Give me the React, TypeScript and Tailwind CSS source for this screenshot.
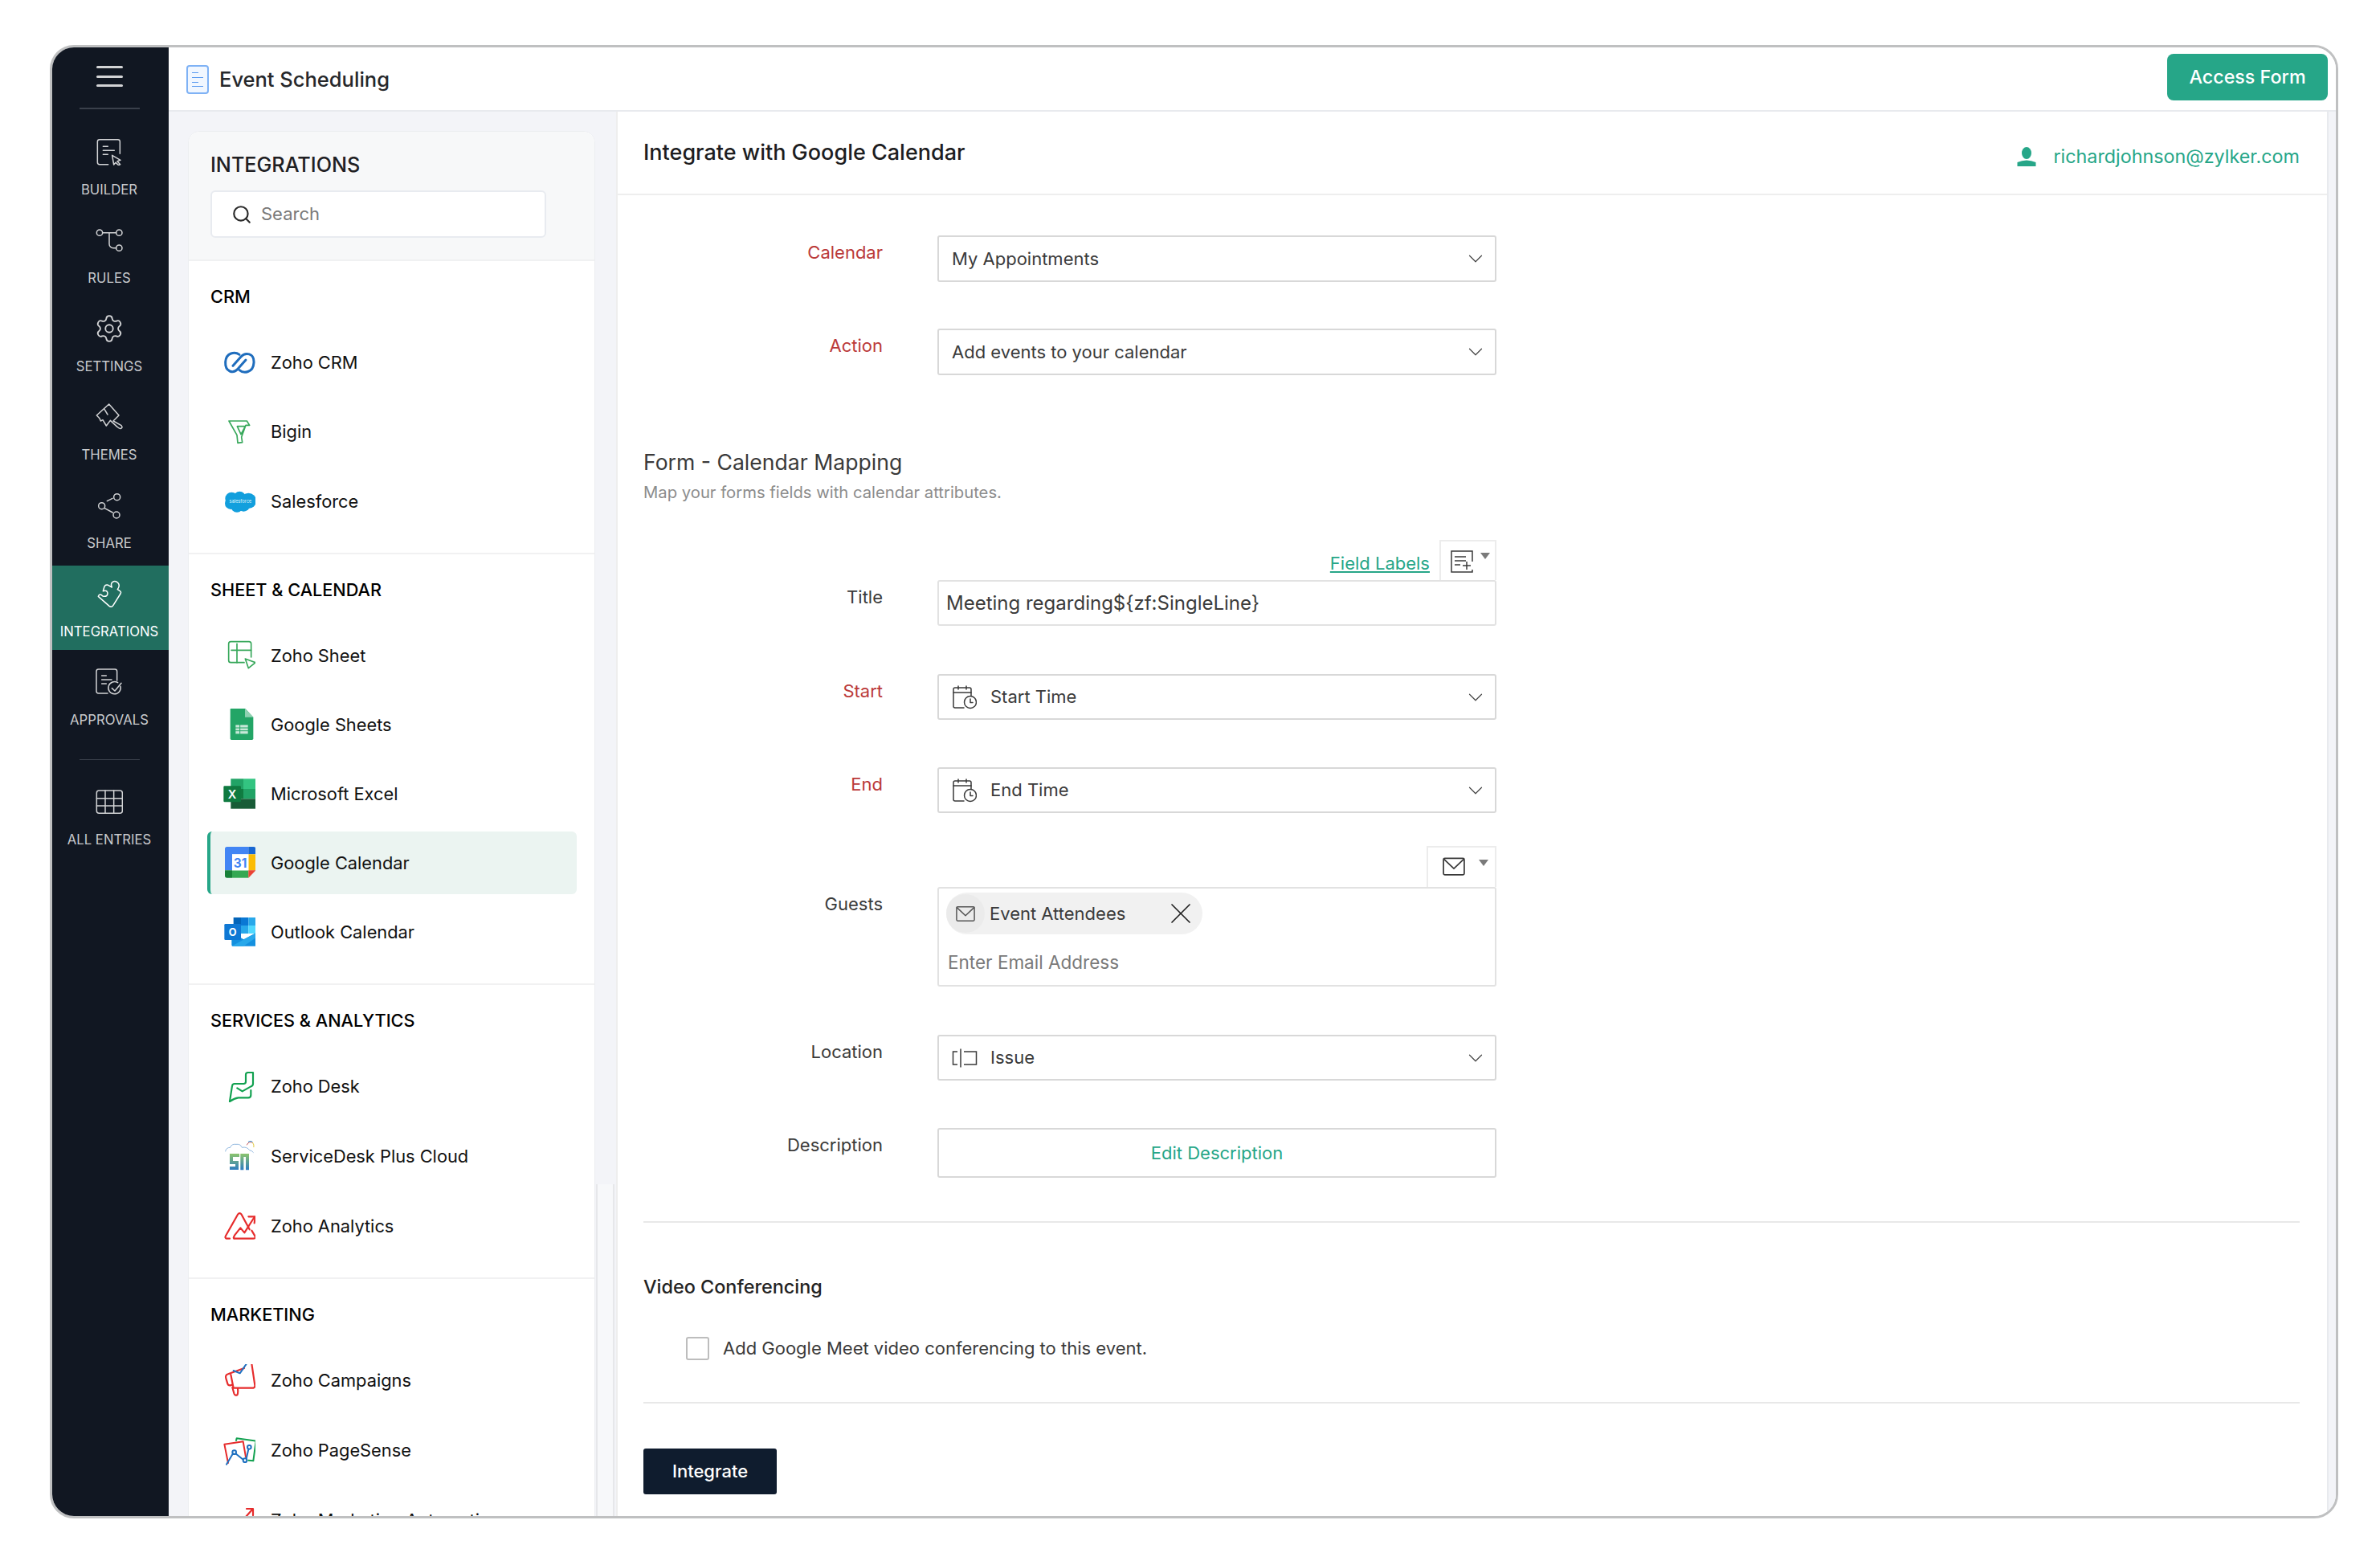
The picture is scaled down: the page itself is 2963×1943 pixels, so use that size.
import { ChevronDown, Search, Settings, X } from "lucide-react";
import type { ReactNode } from "react";

function Svg({ box, size = 34, className, children }: { box: string; size?: number; className?: string; children: ReactNode }) {
  return (
    <svg viewBox={box} width={size} height={size} fill="none" strokeLinecap="round" strokeLinejoin="round" className={className}>
      {children}
    </svg>
  );
}

/* sidebar icons */
const side = { stroke: "#d2d3d5", strokeWidth: 4.5 };

function BuilderIcon() {
  return (
    <Svg box="85 340 102 102">
      <g {...side}>
        <path d="M132 438 H100 a8 8 0 0 1 -8-8 V353 a8 8 0 0 1 8-8 H168 a8 8 0 0 1 8 8 V398" />
        <path d="M113 371 H131 M113 386 H155 M113 401 H131" />
        <path d="M147 404 L178 422 L166 426 L177 438 L171 441 L160 431 L153 439 Z" />
      </g>
    </Svg>
  );
}
function RulesIcon() {
  return (
    <Svg box="85 670 102 102">
      <g {...side}>
        <circle cx="100" cy="693" r="11" />
        <circle cx="173" cy="693" r="11" />
        <circle cx="173" cy="750" r="11" />
        <path d="M111 693 H162 M136 693 V735 a15 15 0 0 0 15 15 H162" />
      </g>
    </Svg>
  );
}
function ThemesIcon() {
  return (
    <Svg box="85 1330 102 102">
      <g {...side}>
        <path d="M89 1375 L135 1333 L172 1375 L151 1396 L180 1412 Q188 1420 180 1424 Q174 1426 166 1418 L140 1394 L125 1414 L112 1392 L104 1396 L100 1386 Z" />
        <path d="M118 1352 L130 1372" />
      </g>
    </Svg>
  );
}
function ShareIcon() {
  return (
    <Svg box="85 155 102 102">
      <g {...side}>
        <circle cx="165" cy="175" r="12" />
        <circle cx="108" cy="208" r="12" />
        <circle cx="163" cy="242" r="12" />
        <path d="M128 190 L148 180 M119 217 L149 233" />
      </g>
    </Svg>
  );
}
function PuzzleIcon() {
  return (
    <Svg box="85 484 102 102">
      <path
        d="M95 545 L136 581 Q145 588 151 578 L178 535 Q182 528 175 524 L167 519 Q178 504 168 494 Q158 484 148 492 Q140 498 146 511 L132 503 Q122 500 118 508 L113 525 Q128 520 130 533 Q130 548 112 544 Q100 532 95 545 Z"
        stroke="#ffffff"
        strokeWidth="4.5"
      />
    </Svg>
  );
}
function ApprovalsIcon() {
  return (
    <Svg box="85 815 102 102">
      <g {...side}>
        <path d="M130 908 H96 a8 8 0 0 1 -8-8 V826 a8 8 0 0 1 8-8 H157 a8 8 0 0 1 8 8 V860" />
        <path d="M108 842 H125 M108 857 H145 M108 872 H125" />
        <path d="M178 882 A23 23 0 1 1 168 868" />
        <path d="M146 889 L157 899 L181 870" />
      </g>
    </Svg>
  );
}
function GridIcon() {
  return (
    <Svg box="85 1262 102 102">
      <g {...side}>
        <rect x="89" y="1271" width="96" height="85" rx="9" />
        <path d="M89 1300 H185 M89 1328 H185 M121 1271 V1356 M153 1271 V1356" />
      </g>
    </Svg>
  );
}

/* logos, 40px box */
function ZohoCrm() {
  return (
    <Svg box="24 3 120 120" size={40}>
      <g stroke="#1f6dbd" strokeWidth="9">
        <path d="M84 34 C68 22 34 26 32 62 C30 100 62 106 78 88 L108 54" />
        <path d="M84 92 C100 106 136 102 138 64 C140 28 106 24 90 42 L60 76" />
      </g>
    </Svg>
  );
}
function BiginLogo() {
  return (
    <Svg box="24 264 120 120" size={40}>
      <path d="M45 282 H112 L122 298 H108 L92 342 L95 362 L78 364 L75 335 Z M76 302 H106 L90 332 Z" stroke="#38a85b" strokeWidth="5" />
    </Svg>
  );
}
function SalesforceLogo() {
  return (
    <Svg box="24 522 120 120" size={40}>
      <g fill="#129fdd">
        <circle cx="55" cy="572" r="24" />
        <circle cx="85" cy="568" r="23" />
        <circle cx="118" cy="580" r="29" />
        <circle cx="75" cy="600" r="23" />
        <circle cx="52" cy="590" r="22" />
        <circle cx="100" cy="596" r="24" />
      </g>
      <text x="88" y="587" fill="#dff3fb" fontSize="17" textAnchor="middle" fontFamily="Inter, sans-serif">salesforce</text>
    </Svg>
  );
}
function ZohoSheet() {
  return (
    <Svg box="24 1098 120 120" size={40}>
      <g stroke="#38a85b" strokeWidth="5">
        <path d="M102 1184 H52 a8 8 0 0 1-8-8 V1114 a8 8 0 0 1 8-8 H120 a8 8 0 0 1 8 8 V1164" />
        <path d="M54 1138 H128 M75 1114 V1184" />
        <path d="M106 1170 L144 1184 L118 1205 Z" />
      </g>
    </Svg>
  );
}
function GoogleSheets() {
  return (
    <Svg box="24 1356 120 120" size={40}>
      <path d="M55 1355 H105 L136 1388 V1468 a5 5 0 0 1-5 5 H55 a5 5 0 0 1-5-5 V1360 a5 5 0 0 1 5-5 Z" fill="#23a566" />
      <path d="M105 1355 L136 1388 H105 Z" fill="#8ed1b1" />
      <rect x="70" y="1417" width="46" height="33" fill="#c7e8d7" />
      <path d="M70 1428 H116 M70 1439 H116 M86 1417 V1450" stroke="#23a566" strokeWidth="3" />
    </Svg>
  );
}
function ExcelLogo() {
  return (
    <Svg box="24 204 120 120" size={40}>
      <rect x="52" y="208" width="47" height="38" fill="#21a366" />
      <rect x="99" y="208" width="46" height="38" fill="#33c481" />
      <rect x="52" y="246" width="47" height="37" fill="#107c41" />
      <rect x="99" y="246" width="46" height="37" fill="#21a366" />
      <rect x="52" y="283" width="93" height="37" fill="#185c37" />
      <rect x="25" y="235" width="65" height="60" rx="4" fill="#0f7a40" />
      <text x="57" y="281" fill="#ffffff" fontSize="44" fontWeight="600" textAnchor="middle" fontFamily="Inter, sans-serif">X</text>
    </Svg>
  );
}
function GoogleCalendar() {
  return (
    <Svg box="24 462 120 120" size={40}>
      <path d="M38 462 H118 V490 H57 V550 H30 V470 a8 8 0 0 1 8-8 Z" fill="#4285f4" />
      <path d="M118 462 H137 a8 8 0 0 1 8 8 V490 H118 Z" fill="#1967d2" />
      <rect x="118" y="490" width="27" height="60" fill="#fbbc04" />
      <rect x="57" y="550" width="61" height="28" fill="#34a853" />
      <path d="M30 550 H57 V578 H38 a8 8 0 0 1-8-8 Z" fill="#188038" />
      <path d="M118 550 H145 L118 578 Z" fill="#ea4335" />
      <rect x="57" y="490" width="61" height="60" fill="#ffffff" />
      <text x="87" y="539" fill="#4285f4" fontSize="46" fontWeight="700" textAnchor="middle" fontFamily="Inter, sans-serif">31</text>
    </Svg>
  );
}
function OutlookLogo() {
  return (
    <Svg box="24 720 120 120" size={40}>
      <rect x="62" y="726" width="28" height="30" fill="#0364b8" />
      <rect x="90" y="726" width="28" height="30" fill="#0a78d4" />
      <rect x="118" y="726" width="26" height="30" fill="#28a8ea" />
      <rect x="62" y="756" width="28" height="30" fill="#0a78d4" />
      <rect x="90" y="756" width="28" height="30" fill="#28a8ea" />
      <rect x="118" y="756" width="26" height="30" fill="#50d9ff" />
      <path d="M55 782 L100 808 L148 782 V828 a5 5 0 0 1-5 5 H60 a5 5 0 0 1-5-5 Z" fill="#1490df" />
      <path d="M55 833 L148 782 V800 L100 833 Z" fill="#28a8ea" />
      <rect x="28" y="750" width="62" height="60" rx="4" fill="#0f78d4" />
      <text x="59" y="794" fill="#ffffff" fontSize="38" fontWeight="700" textAnchor="middle" fontFamily="Inter, sans-serif">O</text>
    </Svg>
  );
}
function ZohoDesk() {
  return (
    <Svg box="24 33 120 120" size={40}>
      <g stroke="#12a150" strokeWidth="6.5">
        <path d="M48 150 L57 92 Q58 84 66 84 H100 Q108 84 108 76 V50 Q108 42 116 42 H135 V84 Q135 92 127 94 L95 112 L76 100" />
        <path d="M127 108 V126 Q127 136 117 136 H80 Q65 138 48 150" />
      </g>
    </Svg>
  );
}
function ServiceDesk() {
  return (
    <Svg box="24 294 120 120" size={40}>
      <defs>
        <linearGradient id="sd" gradientUnits="userSpaceOnUse" x1="0" y1="345" x2="0" y2="405">
          <stop offset="0" stopColor="#8cc56c" />
          <stop offset="1" stopColor="#2f7cc0" />
        </linearGradient>
      </defs>
      <path d="M32 336 Q34 322 50 322 Q54 308 72 310 Q88 308 94 322 Q112 318 122 332 Q132 334 136 340" stroke="#7ca9d8" strokeWidth="2.5" />
      <path d="M112 312 Q120 296 134 304" stroke="#c55a5a" strokeWidth="3" />
      <path d="M134 304 Q140 312 138 320" stroke="#e3c93f" strokeWidth="3" />
      <path d="M118 300 Q126 296 132 300" stroke="#3a9ad9" strokeWidth="3" />
      <g stroke="url(#sd)" strokeWidth="12" strokeLinecap="butt" strokeLinejoin="miter">
        <path d="M84 351 H54 V378 H75 V399 H48" />
        <path d="M94 406 V351 H114 V406" />
      </g>
    </Svg>
  );
}
function ZohoAnalytics() {
  return (
    <Svg box="24 555 120 120" size={40}>
      <g stroke="#e62c2c" strokeWidth="6.5">
        <path d="M48 662 H36 Q29 660 33 652 L78 572 Q85 563 92 572 L122 628" />
        <path d="M64 660 Q60 662 66 650 L88 622 L103 640 L140 582" />
        <path d="M118 580 H143 L140 604" />
        <path d="M64 662 H136 Q146 662 142 652 L130 632" />
      </g>
    </Svg>
  );
}
function ZohoCampaigns() {
  return (
    <Svg box="24 1131 120 120" size={40}>
      <g stroke="#e62c2c" strokeWidth="6.5">
        <path d="M102 1146 L42 1168 Q30 1172 34 1184 L40 1204 Q42 1212 52 1210 L56 1208" />
        <path d="M52 1170 L62 1220 H136 Q143 1218 142 1210 L128 1116 H120" />
        <path d="M58 1218 L64 1240 Q68 1250 76 1246 Q80 1240 78 1222" />
      </g>
      <path d="M62 1155 L86 1165 L120 1116" stroke="#1e70c0" strokeWidth="6" />
    </Svg>
  );
}
function ZohoPageSense() {
  return (
    <Svg box="24 1392 120 120" size={40}>
      <path d="M72 1416 L74 1408 L146 1418 L136 1492 L118 1490" stroke="#12a150" strokeWidth="6" />
      <path d="M42 1500 L28 1430 L98 1420 L108 1478" stroke="#e62c2c" strokeWidth="6" />
      <g stroke="#1e70c0" strokeWidth="6">
        <path d="M36 1505 L60 1465 M70 1465 L98 1487 M110 1484 L118 1448" />
        <circle cx="65" cy="1460" r="7" />
        <circle cx="105" cy="1490" r="7" />
        <circle cx="121" cy="1441" r="7" />
      </g>
    </Svg>
  );
}
function MarketingAutomation() {
  return (
    <Svg box="0 0 40 40" size={40}>
      <path d="M4 16 H28 L36 7 M29 6 H37 V14" stroke="#e62c2c" strokeWidth="2.2" />
    </Svg>
  );
}

/* form icons */
function CalClock() {
  return (
    <Svg box="0 0 30 30" size={30}>
      <g stroke="#3a3a3a" strokeWidth="1.5">
        <path d="M14 28 H3 a2 2 0 0 1-2-2 V5 a2 2 0 0 1 2-2 H21 a2 2 0 0 1 2 2 V13" />
        <path d="M1 9 H23 M7 1 V5 M17 1 V5" />
        <circle cx="22" cy="21" r="7.5" />
        <path d="M22 17 V21.5 H25" />
      </g>
    </Svg>
  );
}
function MailIcon({ size = 26, color = "#3a3a3a" }: { size?: number; color?: string }) {
  return (
    <Svg box="0 0 26 26" size={size}>
      <g stroke={color} strokeWidth="1.6">
        <rect x="1" y="4" width="24" height="19" rx="1.5" />
        <path d="M1.5 5 L13 16 L24.5 5" />
      </g>
    </Svg>
  );
}

type Item = { name: string; logo: ReactNode; active?: boolean };

const sections: { title: string; gap: string; items: Item[] }[] = [
  {
    title: "CRM",
    gap: "gap-[8.5px]",
    items: [
      { name: "Zoho CRM", logo: <ZohoCrm /> },
      { name: "Bigin", logo: <BiginLogo /> },
      { name: "Salesforce", logo: <SalesforceLogo /> },
    ],
  },
  {
    title: "SHEET & CALENDAR",
    gap: "gap-[8px]",
    items: [
      { name: "Zoho Sheet", logo: <ZohoSheet /> },
      { name: "Google Sheets", logo: <GoogleSheets /> },
      { name: "Microsoft Excel", logo: <ExcelLogo /> },
      { name: "Google Calendar", logo: <GoogleCalendar />, active: true },
      { name: "Outlook Calendar", logo: <OutlookLogo /> },
    ],
  },
  {
    title: "SERVICES & ANALYTICS",
    gap: "gap-[9px]",
    items: [
      { name: "Zoho Desk", logo: <ZohoDesk /> },
      { name: "ServiceDesk Plus Cloud", logo: <ServiceDesk /> },
      { name: "Zoho Analytics", logo: <ZohoAnalytics /> },
    ],
  },
  {
    title: "MARKETING",
    gap: "gap-[9px]",
    items: [
      { name: "Zoho Campaigns", logo: <ZohoCampaigns /> },
      { name: "Zoho PageSense", logo: <ZohoPageSense /> },
      { name: "Zoho Marketing Automation", logo: <MarketingAutomation /> },
    ],
  },
];

function NavItem({ icon, label, active }: { icon: ReactNode; label: string; active?: boolean }) {
  return (
    <div className={`mb-[4.5px] flex h-[105.5px] flex-col items-center pt-[18px] pr-[3px] ${active ? "bg-[#216e5f] text-white" : "text-[#c8cacd]"}`}>
      <div className="flex h-[34px] items-center justify-center">{icon}</div>
      <div className="mt-[18px] text-[16.7px] leading-[24px] whitespace-nowrap">{label}</div>
    </div>
  );
}

function Sidebar() {
  return (
    <aside className="flex w-[145px] shrink-0 flex-col bg-[#111722]">
      <div className="mt-[23px] pr-[3px]">
        <div className="mx-auto flex w-[33px] flex-col gap-[8.5px]">
          <div className="h-[3px] rounded-full bg-[#d2d3d5]" />
          <div className="h-[3px] rounded-full bg-[#d2d3d5]" />
          <div className="h-[3px] rounded-full bg-[#d2d3d5]" />
        </div>
        <div className="mx-auto mt-[26px] h-[1.5px] w-[75px] bg-[#3a404b]" />
      </div>
      <div className="mt-[18px]">
        <NavItem icon={<BuilderIcon />} label="BUILDER" />
        <NavItem icon={<RulesIcon />} label="RULES" />
        <NavItem icon={<Settings size={38} strokeWidth={1.15} color="#d2d3d5" />} label="SETTINGS" />
        <NavItem icon={<ThemesIcon />} label="THEMES" />
        <NavItem icon={<ShareIcon />} label="SHARE" />
        <NavItem icon={<PuzzleIcon />} label="INTEGRATIONS" active />
        <NavItem icon={<ApprovalsIcon />} label="APPROVALS" />
      </div>
      <div className="mt-[21px] pr-[3px]">
        <div className="mx-auto h-[1.5px] w-[75px] bg-[#3a404b]" />
      </div>
      <div className="mt-[17px]">
        <NavItem icon={<GridIcon />} label="ALL ENTRIES" />
      </div>
    </aside>
  );
}

function IntegrationList() {
  return (
    <div className="relative w-[557px] shrink-0 bg-[#f3f4f8] pt-[24px] pl-[24px]">
      <div className="w-[507px] rounded-t-[14px] border border-[#eceef1] bg-white">
        <div className="rounded-t-[14px] border-b-2 border-[#f0f1f2] bg-[#f7f8f9] px-[27px] pt-[25px] pb-[27px]">
          <h2 className="text-[25.2px] leading-[32px] font-medium text-[#1f2023]">INTEGRATIONS</h2>
          <div className="mt-[16px] flex h-[59px] w-[418px] items-center rounded-[6px] border-2 border-[#e8ebf0] bg-white pl-[24px]">
            <Search size={26} strokeWidth={2} color="#2b2b2b" />
            <span className="ml-[11px] text-[22px] text-[#7a7a7a]">Search</span>
          </div>
        </div>
        {sections.map((s) => (
          <section key={s.title} className="border-b-2 border-[#f1f1f2] pt-[30px] pb-[25px]">
            <h3 className="px-[27px] text-[21.7px] leading-[28px] font-medium text-black">{s.title}</h3>
            <div className={`mt-[29px] flex flex-col ${s.gap} pl-[23px]`}>
              {s.items.map((it) => (
                <div
                  key={it.name}
                  className={`flex h-[78px] w-[460px] items-center ${it.active ? "rounded-[6px] border-l-4 border-[#26a688] bg-[#ebf4f1] pl-[16px]" : "pl-[20px]"}`}
                >
                  <div className="h-[40px] w-[40px] shrink-0">{it.logo}</div>
                  <span className="ml-[19px] text-[21.8px] whitespace-nowrap text-[#111111]">{it.name}</span>
                </div>
              ))}
            </div>
          </section>
        ))}
      </div>
      {/* scrollbar track */}
      <div className="absolute top-[1335px] right-[2px] bottom-0 w-[23px] border-x-2 border-[#e6e7ea] bg-[#f7f8fa]" />
    </div>
  );
}

function Label({ text, required }: { text: string; required?: boolean }) {
  return (
    <div className={`w-[298px] shrink-0 pt-[7px] text-right text-[22px] leading-[28px] ${required ? "text-[#bb3a3a]" : "text-[#3b3b3b]"}`}>
      {text}
    </div>
  );
}

function Select({ text, icon, height = "h-[58px]" }: { text: string; icon?: ReactNode; height?: string }) {
  return (
    <div className={`flex ${height} w-[696px] items-center rounded-[3px] border-2 border-[#d8d8d8] pr-[9px] pl-[16px] text-[22px] text-[#3b3b3b]`}>
      {icon && <div className="mr-[16px] flex w-[32px] justify-center">{icon}</div>}
      <span className="flex-1">{text}</span>
      <ChevronDown size={30} strokeWidth={0.95} color="#444444" />
    </div>
  );
}

function Caret() {
  return <div className="h-0 w-0 border-x-[6.5px] border-t-[8px] border-x-transparent border-t-[#7a7a7a]" />;
}

function FormPanel() {
  return (
    <main className="flex-1 border-l-2 border-[#eeeeee] bg-white">
      <div className="flex h-[104px] items-center justify-between border-b-2 border-[#eeeeee] pr-[34px] pl-[32px]">
        <h1 className="text-[27px] font-medium text-[#1d1d1f]">Integrate with Google Calendar</h1>
        <div className="mt-[10px] flex items-center gap-[21px] text-[23.3px] text-[#26a688]">
          <svg width="24" height="24" viewBox="0 0 24 24" fill="#26a688">
            <ellipse cx="12" cy="7.5" rx="6" ry="7.5" />
            <path d="M0.5 19 Q12 14 23.5 19 V24 H0.5 Z" />
          </svg>
          richardjohnson@zylker.com
        </div>
      </div>
      <div className="px-[32px] pt-[50px]">
        <div className="flex gap-[68px]">
          <Label text="Calendar" required />
          <Select text="My Appointments" />
        </div>
        <div className="mt-[58px] flex gap-[68px]">
          <Label text="Action" required />
          <Select text="Add events to your calendar" />
        </div>
        <h2 className="mt-[90px] text-[26.6px] leading-[36px] text-[#3a3a3a]">Form - Calendar Mapping</h2>
        <p className="mt-[6px] text-[20.25px] leading-[28px] text-[#8c8c8c]">Map your forms fields with calendar attributes.</p>

        <div className="mt-[45px] ml-[366px] flex h-[50px] w-[696px] items-end justify-end">
          <span className="mr-[12px] mb-[7px] text-[22px] leading-[28px] text-[#26a688] underline underline-offset-2">Field Labels</span>
          <div className="flex h-[50px] w-[71px] items-start gap-[9px] border-x-2 border-t-2 border-[#ececec] pt-[11px] pl-[12px]">
            <svg width="28" height="28" viewBox="0 0 28 28" fill="none" stroke="#3a3a3a" strokeWidth="1.5">
              <path d="M27 14 V1 H1 V27 H27 V24" />
              <path d="M5 8 H19 M5 13 H19 M5 18 H12 M15 19 H25 M20 14 V24" />
            </svg>
            <div className="mt-[3px]"><Caret /></div>
          </div>
        </div>
        <div className="flex gap-[68px]">
          <Label text="Title" />
          <div className="flex h-[57px] w-[696px] items-center rounded-[3px] border-2 border-[#e2e2e2] pl-[9px] text-[24px] text-[#3b3b3b]">
            Meeting regarding{"${zf:SingleLine}"}
          </div>
        </div>
        <div className="mt-[60px] flex gap-[68px]">
          <Label text="Start" required />
          <Select text="Start Time" icon={<CalClock />} height="h-[57px]" />
        </div>
        <div className="mt-[59px] flex gap-[68px]">
          <Label text="End" required />
          <Select text="End Time" icon={<CalClock />} height="h-[57px]" />
        </div>

        <div className="mt-[41px] ml-[366px] flex h-[51px] w-[696px] justify-end">
          <div className="flex h-[51px] w-[87px] items-start gap-[17px] border-x-2 border-t-2 border-[#ececec] pt-[9px] pl-[18px]">
            <MailIcon size={28} />
            <div className="mt-[6px]"><Caret /></div>
          </div>
        </div>
        <div className="flex gap-[68px]">
          <Label text="Guests" />
          <div className="h-[124px] w-[696px] rounded-[3px] border-2 border-[#e2e2e2] pt-[5px] pl-[9px]">
            <div className="relative flex h-[52px] w-[319px] items-center rounded-full bg-[#f1f1f1] text-[22px] text-[#3b3b3b]">
              <div className="flex h-[48px] w-[48px] items-center justify-center rounded-full bg-[#ebebeb]">
                <MailIcon size={24} color="#555555" />
              </div>
              <span className="ml-[6px]">Event Attendees</span>
              <X className="absolute top-[4px] right-[5px]" size={44} strokeWidth={0.9} color="#1f1f1f" />
            </div>
            <div className="mt-[21px] pl-[2px] text-[22.5px] leading-[28px] text-[#7a7a7a]">Enter Email Address</div>
          </div>
        </div>
        <div className="mt-[60px] flex gap-[68px]">
          <Label text="Location" />
          <Select
            text="Issue"
            height="h-[57px]"
            icon={
              <svg width="32" height="24" viewBox="0 0 32 24" fill="none" stroke="#3a3a3a" strokeWidth="1.5">
                <path d="M7 4 H1.5 V20 H7 M11 0.5 V23.5 M15 4 H30.5 V20 H15" />
              </svg>
            }
          />
        </div>
        <div className="mt-[59px] flex gap-[68px]">
          <Label text="Description" />
          <div className="flex h-[62px] w-[696px] items-center justify-center rounded-[3px] border-2 border-[#d8d8d8] text-[22px] text-[#26a688]">
            Edit Description
          </div>
        </div>
        <div className="mt-[54px] h-[2px] w-[2062px] bg-[#e8e8e8]" />
        <h3 className="mt-[64px] text-[23.4px] leading-[32px] font-medium text-[#232323]">Video Conferencing</h3>
        <div className="mt-[46px] ml-[53px] flex h-[29px] items-center gap-[17px] text-[22px] text-[#3b3b3b]">
          <div className="h-[29px] w-[29px] rounded-[3px] border-2 border-[#bdbdbd]" />
          Add Google Meet video conferencing to this event.
        </div>
        <div className="mt-[52px] h-[2px] w-[2062px] bg-[#e8e8e8]" />
        <button className="mt-[56px] h-[57px] w-[166px] rounded-[3px] bg-[#0f1c2e] text-[22px] font-medium text-white">Integrate</button>
      </div>
    </main>
  );
}

export default function App() {
  return (
    <div className="h-[1943px] w-[2963px] overflow-hidden bg-white pt-[56px] pl-[62px] font-['Inter',sans-serif]">
      <div className="flex h-[1834px] w-[2849px] overflow-hidden rounded-[30px] border-[3px] border-[#bfc0c1]">
        <Sidebar />
        <div className="flex min-w-0 flex-1 flex-col">
          <header className="flex h-[80px] shrink-0 items-center justify-between border-b-2 border-[#e8eaee] bg-white pr-[10px] pl-[22px]">
            <div className="mt-[2px] flex items-center gap-[13px]">
              <div className="flex h-[36px] w-[28px] flex-col gap-[5px] rounded-[4px] border-2 border-[#7fb2f5] bg-[#f1f7ff] px-[5px] py-[7px]">
                <div className="h-[1.5px] w-[8px] bg-[#5b9bf0]" />
                <div className="h-[1.5px] w-[14px] bg-[#5b9bf0]" />
                <div className="h-[1.5px] w-[8px] bg-[#5b9bf0]" />
                <div className="h-[1.5px] w-[14px] bg-[#5b9bf0]" />
              </div>
              <span className="text-[25.5px] font-medium text-[#26282b]">Event Scheduling</span>
            </div>
            <button className="mb-[4px] h-[58px] w-[200px] rounded-[8px] bg-[#26a688] text-[23.3px] font-medium text-white">Access Form</button>
          </header>
          <div className="flex min-h-0 flex-1">
            <IntegrationList />
            <FormPanel />
            <div className="w-[11px] shrink-0 border-l-2 border-[#e8eaee] bg-[#f3f4f8]" />
          </div>
        </div>
      </div>
    </div>
  );
}
